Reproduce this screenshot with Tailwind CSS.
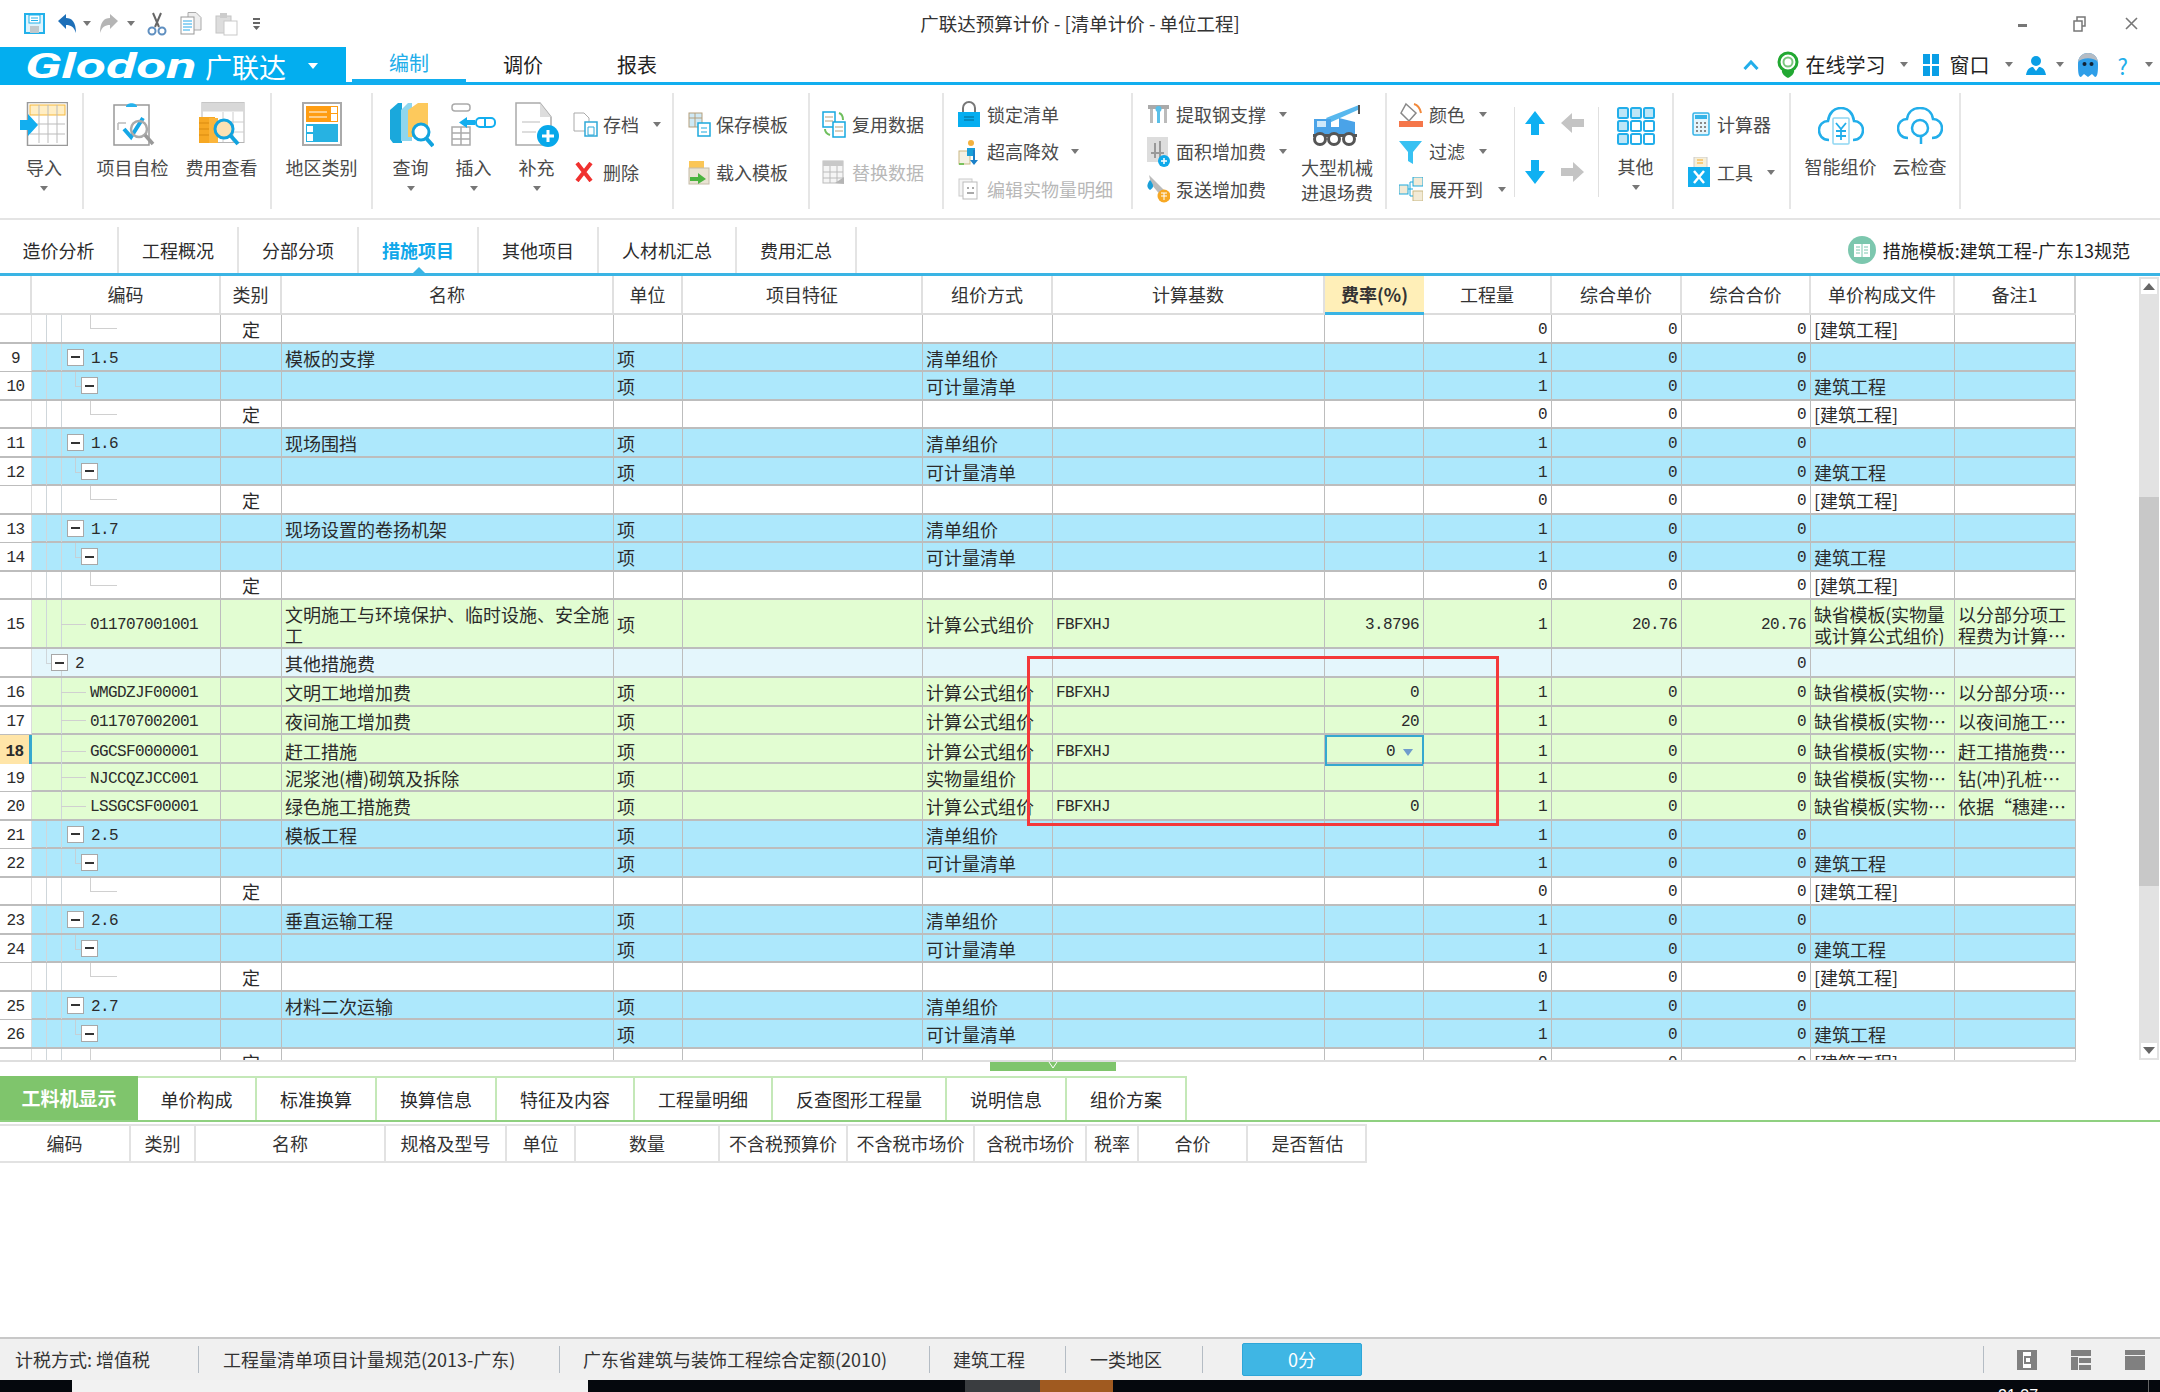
<!DOCTYPE html>
<html lang="zh-CN">
  <head>
    <meta charset="UTF-8" />
    <title>广联达预算计价 - [清单计价 - 单位工程]</title>
    <script src="https://cdn.jsdelivr.net/npm/@tailwindcss/browser@4"></script>
  </head>
  <body class="w-[2160px] h-[1392px] overflow-hidden bg-white text-[18px] text-[#2b2b2b] [font-family:'Noto_Sans_CJK_SC','Noto_Sans',sans-serif]">
    <!-- title bar -->
    <div class="grid grid-cols-[1fr_auto_1fr] items-center h-[47px] bg-white">
      <div class="flex items-center h-[40px] pl-[24px]">
        <svg width="21" height="21" viewBox="0 0 21 21"><rect x="1" y="1" width="19" height="19" fill="#dff4fd" stroke="#22b1ea" stroke-width="2"/><rect x="5" y="2" width="11" height="8" fill="#fff" stroke="#22b1ea"/><path d="M7 5h7M7 7.500h7" stroke="#22b1ea"/><rect x="6" y="13" width="9" height="7" fill="#bfc8cc"/></svg>
        <svg class="ml-[12px]" width="20" height="21" viewBox="0 0 20 21"><path d="M1 8 9 1v4c6 0 10 4 10 15-2-6-5-8-10-8v4z" fill="#1d6fb8"/></svg>
        <span class="ml-[6px] w-0 h-0 border-x-[4px] border-x-transparent border-t-[5px] border-t-[#777]"></span>
        <svg class="ml-[8px]" width="20" height="21" viewBox="0 0 20 21"><path d="M19 8 11 1v4C5 5 1 9 1 20c2-6 5-8 10-8v4z" fill="#b5b5b5"/></svg>
        <span class="ml-[8px] w-0 h-0 border-x-[4px] border-x-transparent border-t-[5px] border-t-[#777]"></span>
        <svg class="ml-[12px]" width="20" height="24" viewBox="0 0 20 24"><path d="M6 1l6 14M14 1 8 15" stroke="#666" stroke-width="2"/><circle cx="5" cy="19" r="3.500" fill="none" stroke="#5f8fc0" stroke-width="2"/><circle cx="15" cy="19" r="3.500" fill="none" stroke="#5f8fc0" stroke-width="2"/></svg>
        <svg class="ml-[13px]" width="23" height="24" viewBox="0 0 23 24"><path d="M8 .5h8l5 5V18H8z" fill="#eee" stroke="#aaa"/><rect x="1" y="5" width="13" height="17" fill="#fff" stroke="#999"/><path d="M3 9h9M3 12h9M3 15h9M3 18h7" stroke="#2aa9e8"/></svg>
        <svg class="ml-[12px]" width="23" height="24" viewBox="0 0 23 24"><rect x="1" y="4" width="15" height="17" fill="#ddd" stroke="#c4c4c4"/><rect x="5" y="1" width="7" height="5" fill="#ccc"/><rect x="9" y="9" width="13" height="14" fill="#fff" stroke="#c9c9c9"/></svg>
        <svg class="ml-[14px]" width="9" height="14" viewBox="0 0 9 14"><path d="M1 1h7v2H1zM1 5h7v2H1zM1 9h7l-3.500 4z" fill="#666"/></svg>
      </div>
      <div class="text-[18.500px] text-[#333]">广联达预算计价 - [清单计价 - 单位工程]</div>
      <div class="flex justify-end items-center h-[40px] pr-[22px]">
        <div class="w-[9px] h-[3px] bg-[#777] mt-[4px]"></div>
        <svg class="ml-[46px]" width="13" height="16" viewBox="0 0 13 16"><rect x="4" y="1" width="8" height="9" fill="none" stroke="#777" stroke-width="1.500"/><rect x="1" y="5" width="8" height="10" fill="#fff" stroke="#777" stroke-width="1.500"/></svg>
        <svg class="ml-[39px]" width="13" height="13" viewBox="0 0 13 13"><path d="M1 1l11 11M12 1 1 12" stroke="#777" stroke-width="1.600"/></svg>
      </div>
    </div>

    <!-- menu bar -->
    <div class="flex h-[38px] border-b-[3px] border-[#12aeef]">
      <div class="flex items-center w-[346px] h-[38px] pl-[25px] bg-[#03aeef] text-white overflow-hidden">
        <span class="inline-block w-[174px] origin-left scale-x-[1.58] italic font-bold text-[35px] leading-none [font-family:Roboto,sans-serif]">Glodon</span>
        <span class="ml-[6px] text-[27px] leading-none">广联达</span>
        <span class="ml-[22px] w-0 h-0 border-x-[5px] border-x-transparent border-t-[6px] border-t-white"></span>
      </div>
      <div class="ml-[6px] flex items-center justify-center w-[114px] text-[20px] text-[#22aeea] border-b-[3px] border-[#12aeef]">编制</div>
      <div class="flex items-center justify-center w-[114px] text-[20px] text-[#222]">调价</div>
      <div class="flex items-center justify-center w-[114px] text-[20px] text-[#222]">报表</div>
      <div class="ml-auto flex items-center pr-[7px]">
        <svg width="16" height="10" viewBox="0 0 16 10"><path d="M1.500 9 8 2l6.500 7" fill="none" stroke="#22aeea" stroke-width="3"/></svg>
        <svg class="ml-[17px]" width="24" height="28" viewBox="0 0 24 28"><circle cx="12" cy="11" r="9" fill="none" stroke="#22a832" stroke-width="3"/><circle cx="12" cy="11" r="4.500" fill="none" stroke="#7bc67e" stroke-width="2"/><path d="M6 19c-1 4 4 7 6 8 2-1 7-4 6-8z" fill="#22a832"/></svg>
        <span class="ml-[6px] text-[20px] text-[#222]">在线学习</span>
        <span class="ml-[14px] w-0 h-0 border-x-[4px] border-x-transparent border-t-[5px] border-t-[#777]"></span>
        <svg class="ml-[15px]" width="16" height="22" viewBox="0 0 16 22"><path d="M0 0h7v10H0zM9 0h7v10H9zM0 12h7v10H0zM9 12h7v10H9z" fill="#0a9fe6"/></svg>
        <span class="ml-[11px] text-[20px] text-[#222]">窗口</span>
        <span class="ml-[15px] w-0 h-0 border-x-[4px] border-x-transparent border-t-[5px] border-t-[#777]"></span>
        <svg class="ml-[13px]" width="20" height="20" viewBox="0 0 20 20"><circle cx="10" cy="6" r="5" fill="#0a9fe6"/><path d="M0 20c1-6 4-8 7-8l3 4 3-4c3 0 6 2 7 8z" fill="#0a9fe6"/></svg>
        <span class="ml-[10px] w-0 h-0 border-x-[4px] border-x-transparent border-t-[5px] border-t-[#777]"></span>
        <svg class="ml-[12px]" width="24" height="26" viewBox="0 0 24 26"><path d="M2 12C2 5 6 1 12 1s10 4 10 11c0 6 0 13-3 13l-3-3-4 3-4-3-3 3C2 25 2 18 2 12z" fill="#2f9ee8"/><path d="M2 10C3 4 7 1 12 1s9 3 10 9C18 5 6 5 2 10z" fill="#b5bcc4"/><circle cx="8.500" cy="12" r="2" fill="#123"/><circle cx="15.500" cy="12" r="2" fill="#123"/></svg>
        <span class="ml-[18px] text-[22px] leading-none text-[#22aeea]">?</span>
        <span class="ml-[17px] w-0 h-0 border-x-[4px] border-x-transparent border-t-[5px] border-t-[#777]"></span>
      </div>
    </div>

    <!-- ribbon -->
    <div class="flex h-[135px] pt-[8px] pb-[9px] border-b-[2px] border-[#e4e4e4] text-[#4a4a4a] whitespace-nowrap">
      <div class="w-[84px] pl-[12px] border-r-2 border-[#e6e6e6]">
        <div class="flex flex-col items-center w-[64px] pt-[9px]">
          <svg width="48" height="44" viewBox="0 0 48 44"><rect x="7.500" y=".5" width="40" height="43" fill="#fff" stroke="#9a9a9a" stroke-width="1.500"/><rect x="10" y="3" width="35" height="10" fill="#ffeec4" stroke="#f5b83d"/><path d="M19 3v38M28 3v38M37 3v38M10 22h35M10 32h35" stroke="#bbb"/><path d="M0 18h8v-6l10 11-10 11v-6H0z" fill="#12aeef"/></svg>
          <span class="mt-[9px] leading-[24px]">导入</span>
          <span class="mt-[7px] w-0 h-0 border-x-[4px] border-x-transparent border-t-[5px] border-t-[#777]"></span>
        </div>
      </div>
      <div class="flex w-[188px] pl-[4px] border-r-2 border-[#e6e6e6]">
        <div class="flex flex-col items-center w-[89px] pt-[9px]">
          <svg width="48" height="44" viewBox="0 0 48 44"><rect x="5" y="3" width="35" height="40" fill="#fff" stroke="#999" stroke-width="1.500"/><path d="M17 5c0-5 11-5 11 0z" fill="#26b2ec"/><path d="M9 21v7M9 21h8" stroke="#bbb" stroke-width="1.500"/><path d="M15 27l7 8 12-19" fill="none" stroke="#15a7e6" stroke-width="4"/><circle cx="30" cy="27" r="8" fill="none" stroke="#aaa" stroke-width="2.500"/><path d="M36 33l8 9" stroke="#999" stroke-width="3.500"/></svg>
          <span class="mt-[9px] leading-[24px]">项目自检</span>
        </div>
        <div class="flex flex-col items-center w-[89px] pt-[9px]">
          <svg width="48" height="44" viewBox="0 0 48 44"><rect x="4" y=".5" width="42" height="40" fill="#fff" stroke="#b5b5b5"/><rect x="4" y=".5" width="42" height="9" fill="#d8d8d8"/><path d="M25 10v30M35 10v30M4 20h42M4 30h42" stroke="#ccc"/><path d="M1 15h16v26H1z" fill="#f7a823"/><path d="M1 21h16M1 27h16M1 33h16" stroke="#d98a10"/><path d="M11 16h9v25h-9z" fill="#fbb53b"/><circle cx="26" cy="27" r="9" fill="#fde1b3" stroke="#12a3de" stroke-width="3"/><path d="M32 33l8 9" stroke="#12a3de" stroke-width="4"/></svg>
          <span class="mt-[9px] leading-[24px]">费用查看</span>
        </div>
      </div>
      <div class="flex justify-center w-[101px] border-r-2 border-[#e6e6e6]">
        <div class="flex flex-col items-center pt-[9px]">
          <svg width="40" height="44" viewBox="0 0 40 44"><rect x="1" y="1" width="38" height="42" fill="#fff" stroke="#aaa" stroke-width="2"/><rect x="4" y="4" width="32" height="16" fill="#ff9d12"/><path d="M29 5h6v6h-6zM29 12h6v7h-6z" fill="#fff"/><path d="M7 10h18M7 15h18" stroke="#fff"/><rect x="4" y="22" width="32" height="18" fill="#27b2e2"/><path d="M5 24h6v6H5zM5 32h6v7H5z" fill="#fff"/></svg>
          <span class="mt-[9px] leading-[24px]">地区类别</span>
        </div>
      </div>
      <div class="flex w-[301px] pl-[6px] border-r-2 border-[#e6e6e6]">
        <div class="flex flex-col items-center w-[63px] pt-[9px]">
          <svg width="46" height="46" viewBox="0 0 46 46"><path d="M2 8l8-7h4v40H5l-3-4z" fill="#1aa8dc"/><path d="M13 8l7-7h4v38H13z" fill="#8fd6ee"/><path d="M20 8l10-7 10 0v34H20z" fill="#fdc95c"/><circle cx="33" cy="30" r="8" fill="#fff" stroke="#12a3de" stroke-width="3"/><path d="M38 36l7 8" stroke="#12a3de" stroke-width="4"/></svg>
          <span class="mt-[7px] leading-[24px]">查询</span>
          <span class="mt-[7px] w-0 h-0 border-x-[4px] border-x-transparent border-t-[5px] border-t-[#777]"></span>
        </div>
        <div class="flex flex-col items-center w-[63px] pt-[9px]">
          <svg width="46" height="44" viewBox="0 0 46 44"><g fill="#fff" stroke="#aaa" stroke-width="1.500"><rect x="1" y="2" width="18" height="7" rx="3"/><path d="M1 25h18v18H1zM1 31h18M1 37h18M10 25v18"/></g><path d="M24 18l-8 0 0-3-8 5.500 8 5.500 0-3 8 0z" fill="#12aeef"/><rect x="25" y="16" width="19" height="9" rx="4" fill="#fff" stroke="#12aeef" stroke-width="2"/><path d="M34 16v9" stroke="#12aeef" stroke-width="2"/></svg>
          <span class="mt-[9px] leading-[24px]">插入</span>
          <span class="mt-[7px] w-0 h-0 border-x-[4px] border-x-transparent border-t-[5px] border-t-[#777]"></span>
        </div>
        <div class="flex flex-col items-center w-[63px] pt-[9px]">
          <svg width="46" height="46" viewBox="0 0 46 46"><path d="M2 1h24l11 14v28H2z" fill="#fff" stroke="#aaa" stroke-width="1.500"/><path d="M26 1v14h11z" fill="#ddd"/><path d="M8 20h18M8 30h14" stroke="#ddd" stroke-width="2"/><circle cx="34" cy="34" r="11" fill="#07a8ea"/><path d="M34 28v12M28 34h12" stroke="#fff" stroke-width="3"/></svg>
          <span class="mt-[7px] leading-[24px]">补充</span>
          <span class="mt-[7px] w-0 h-0 border-x-[4px] border-x-transparent border-t-[5px] border-t-[#777]"></span>
        </div>
        <div class="ml-[5px] flex flex-col gap-[24px] pt-[19px]">
          <div class="flex items-center h-[24px]">
            <svg class="w-[25px]" width="25" height="25" viewBox="0 0 25 25"><path d="M1 1h10l5 5v13H1z" fill="#fff" stroke="#aaa"/><rect x="12" y="10" width="12" height="14" fill="#fff" stroke="#2fa9d8" stroke-width="1.500"/><path d="M15 15h6v8h-6z" fill="none" stroke="#2fa9d8"/></svg>
            <span class="ml-[5px]">存档</span>
            <span class="ml-[14px] w-0 h-0 border-x-[4px] border-x-transparent border-t-[5px] border-t-[#777]"></span>
          </div>
          <div class="flex items-center h-[24px]">
            <svg class="w-[25px]" width="25" height="20" viewBox="0 0 25 20"><path d="M4 1l14 18M18 1 4 19" stroke="#f0312f" stroke-width="4"/></svg>
            <span class="ml-[5px]">删除</span>
          </div>
        </div>
      </div>
      <div class="flex flex-col gap-[24px] w-[136px] pl-[14px] pt-[19px] border-r-2 border-[#e6e6e6]">
        <div class="flex items-center h-[24px]">
          <svg class="w-[23px]" width="23" height="25" viewBox="0 0 23 25"><rect x="1" y="1" width="13" height="14" fill="#cfe9f5" stroke="#b59f7c"/><path d="M7 1v14M1 6h13" stroke="#b59f7c"/><rect x="10" y="11" width="12" height="13" fill="#fff" stroke="#1da9dd" stroke-width="1.500"/><path d="M13 16h6M13 20h6" stroke="#1da9dd"/></svg>
          <span class="ml-[5px]">保存模板</span>
        </div>
        <div class="flex items-center h-[24px]">
          <svg class="w-[23px]" width="23" height="25" viewBox="0 0 23 25"><rect x="1" y="1" width="15" height="7" fill="#fbc656"/><rect x="1" y="8" width="20" height="16" fill="#e9e3d3" stroke="#c5bca8"/><path d="M2 17h8v-4l8 6-8 5v-3H2z" fill="#4bb43f"/></svg>
          <span class="ml-[5px]">载入模板</span>
        </div>
      </div>
      <div class="flex flex-col gap-[24px] w-[134px] pl-[12px] pt-[19px] border-r-2 border-[#e6e6e6]">
        <div class="flex items-center h-[24px]">
          <svg class="w-[24px]" width="24" height="27" viewBox="0 0 24 27"><rect x="1" y="1" width="12" height="15" fill="#fff" stroke="#16a8e0" stroke-width="1.500"/><rect x="11" y="11" width="12" height="15" fill="#fff" stroke="#16a8e0" stroke-width="1.500"/><path d="M3 6h8M3 10h8M13 16h8M13 20h8" stroke="#b59f7c"/><path d="M17 2c3 1 4 4 4 7M3 18c0 3 2 5 5 6" fill="none" stroke="#6fbf5e" stroke-width="2"/></svg>
          <span class="ml-[6px]">复用数据</span>
        </div>
        <div class="flex items-center h-[24px] text-[#b8b8b8]">
          <svg class="w-[24px]" width="24" height="27" viewBox="0 0 24 27"><rect x="1" y="2" width="20" height="22" fill="#f5f5f5" stroke="#bbb"/><rect x="1" y="2" width="20" height="5" fill="#c8c8c8"/><path d="M8 7v17M15 7v17M1 13h20M1 19h20" stroke="#bbb"/><path d="M13 24l9-6v7z" fill="#b5b5b5"/></svg>
          <span class="ml-[6px]">替换数据</span>
        </div>
      </div>
      <div class="flex flex-col gap-[13.500px] w-[189px] pl-[14px] pt-[9px] border-r-2 border-[#e6e6e6]">
        <div class="flex items-center h-[24px]">
          <svg class="w-[22px]" width="22" height="26" viewBox="0 0 22 26"><path d="M5 11V7a6 6 0 0 1 12 0v4" fill="none" stroke="#777" stroke-width="2"/><rect x="0" y="11" width="22" height="15" fill="#06aef0"/><path d="M6 16h10M6 19h10" stroke="#05698f"/></svg>
          <span class="ml-[7px]">锁定清单</span>
        </div>
        <div class="flex items-center h-[24px]">
          <svg class="w-[22px]" width="22" height="26" viewBox="0 0 22 26"><rect x="1" y="12" width="11" height="13" fill="#f4f1e4" stroke="#c9b884"/><circle cx="13" cy="4" r="3" fill="#f3b13e"/><path d="M9 9h8v8H9z" fill="#1a9fd8"/><path d="M15 11v10h-3l4 5 4-5h-3V11z" fill="#1a7fc8"/><path d="M1 25h5" stroke="#7ac25e" stroke-width="2"/></svg>
          <span class="ml-[7px]">超高降效</span>
          <span class="ml-[12px] w-0 h-0 border-x-[4px] border-x-transparent border-t-[5px] border-t-[#777]"></span>
        </div>
        <div class="flex items-center h-[24px] text-[#b8b8b8]">
          <svg class="w-[22px]" width="22" height="22" viewBox="0 0 22 22"><rect x="1" y="1" width="13" height="17" fill="#f4f4f4" stroke="#ccc"/><rect x="5" y="4" width="14" height="17" fill="#fff" stroke="#bbb"/><path d="M9 10h2M14 10h2M9 15h7" stroke="#aaa" stroke-width="2"/></svg>
          <span class="ml-[7px]">编辑实物量明细</span>
        </div>
      </div>
      <div class="flex w-[254px] pl-[14px] border-r-2 border-[#e6e6e6]">
        <div class="flex flex-col gap-[13.500px] w-[152px] pt-[9px]">
          <div class="flex items-center h-[24px]">
            <svg class="w-[23px]" width="23" height="20" viewBox="0 0 23 20"><path d="M1 1h21v4H1z" fill="#aaa"/><path d="M3 5h3v14H3zM17 5h3v14h-3z" fill="#bbb"/><path d="M10 5h3v14h-3z" fill="#59bfe8"/><circle cx="11.500" cy="5" r="3" fill="#59bfe8"/></svg>
            <span class="ml-[6px]">提取钢支撑</span>
            <span class="ml-[13px] w-0 h-0 border-x-[4px] border-x-transparent border-t-[5px] border-t-[#777]"></span>
          </div>
          <div class="flex items-center h-[24px]">
            <svg class="w-[23px]" width="23" height="30" viewBox="0 0 23 30"><rect x="0" y="0" width="21" height="25" fill="#ddd"/><path d="M4 16h13M8 6v15M13 4v17" stroke="#999" stroke-width="2"/><circle cx="17" cy="24" r="6" fill="#0ea9ea"/><path d="M17 21v6M14 24h6" stroke="#fff" stroke-width="1.500"/></svg>
            <span class="ml-[6px]">面积增加费</span>
            <span class="ml-[13px] w-0 h-0 border-x-[4px] border-x-transparent border-t-[5px] border-t-[#777]"></span>
          </div>
          <div class="flex items-center h-[24px]">
            <svg class="w-[23px]" width="23" height="28" viewBox="0 0 23 28"><path d="M2 0l18 18-5 4L4 9z" fill="#bbb"/><path d="M3 5c3 4 5 7 0 10-4-3-3-6 0-10z" fill="#1a9fd8"/><circle cx="17" cy="21" r="6.500" fill="#f7a823"/><path d="M14 18h6M14 21h6M17 18v7" stroke="#fff"/></svg>
            <span class="ml-[6px]">泵送增加费</span>
          </div>
        </div>
        <div class="flex flex-col items-center w-[76px] pt-[9px]">
          <svg width="50" height="44" viewBox="0 0 50 44"><path d="M14 16 47 3l1 4-31 14z" fill="#58b8ee"/><path d="M2 17h17v8h8v-9l16 4v12H2z" fill="#4aa3e8"/><rect x="5" y="19" width="9" height="6" fill="#cfe9fa"/><path d="M47 3v9" stroke="#555" stroke-width="2"/><path d="M1 32h44v3H1z" fill="#555"/><circle cx="8" cy="37" r="5.500" fill="#fff" stroke="#555" stroke-width="3"/><circle cx="22" cy="37" r="5.500" fill="#fff" stroke="#555" stroke-width="3"/><circle cx="37" cy="37" r="5.500" fill="#fff" stroke="#555" stroke-width="3"/></svg>
          <span class="mt-[9px] leading-[25px]">大型机械</span>
          <span class="leading-[25px]">进退场费</span>
        </div>
      </div>
      <div class="flex flex-col gap-[13.500px] w-[127px] pl-[12px] pt-[9px]">
        <div class="flex items-center h-[24px]">
          <svg class="w-[24px]" width="24" height="25" viewBox="0 0 24 25"><path d="M7 2l10 9-7 8-8-8z" fill="#fff" stroke="#888" stroke-width="1.500"/><path d="M15 2c4 1 6 4 7 9" fill="none" stroke="#f2893b" stroke-width="2"/><rect x="0" y="19" width="24" height="6" fill="#f5764a"/></svg>
          <span class="ml-[6px]">颜色</span>
          <span class="ml-[14px] w-0 h-0 border-x-[4px] border-x-transparent border-t-[5px] border-t-[#777]"></span>
        </div>
        <div class="flex items-center h-[24px]">
          <svg class="w-[24px]" width="24" height="24" viewBox="0 0 24 24"><path d="M0 1h23l-9 11v12l-5-3v-9z" fill="#38c1f2"/></svg>
          <span class="ml-[6px]">过滤</span>
          <span class="ml-[14px] w-0 h-0 border-x-[4px] border-x-transparent border-t-[5px] border-t-[#777]"></span>
        </div>
        <div class="flex items-center h-[24px]">
          <svg class="w-[24px]" width="24" height="24" viewBox="0 0 24 24"><rect x="0" y="8" width="9" height="9" fill="#f2ead6" stroke="#1da9dd"/><rect x="14" y="0" width="10" height="9" fill="#f2ead6" stroke="#1da9dd"/><rect x="14" y="14" width="10" height="10" fill="#f2ead6" stroke="#c9b884"/><path d="M9 12h5M11 5h3M11 5v14h3" fill="none" stroke="#1da9dd"/></svg>
          <span class="ml-[6px]">展开到</span>
          <span class="ml-[15px] w-0 h-0 border-x-[4px] border-x-transparent border-t-[5px] border-t-[#777]"></span>
        </div>
      </div>
      <div class="w-px h-[90px] mt-[14px] bg-[#e0e0e0]"></div>
      <div class="grid grid-cols-[38px_38px] grid-rows-[24px_24px] gap-y-[25px] w-[83px] pl-[8px] pt-[18px]">
        <svg width="24" height="24" viewBox="0 0 24 24"><path d="M12 0l10 13h-6v11H8V13H2z" fill="#0fb0f2"/></svg>
        <svg width="24" height="24" viewBox="0 0 24 24"><path d="M0 12 11 2v6h12v8H11v6z" fill="#c4c4c4"/></svg>
        <svg width="24" height="24" viewBox="0 0 24 24"><path d="M12 24 2 11h6V0h8v11h6z" fill="#0fb0f2"/></svg>
        <svg width="24" height="24" viewBox="0 0 24 24"><path d="M23 12 12 2v6H0v8h12v6z" fill="#c4c4c4"/></svg>
      </div>
      <div class="w-px h-[90px] mt-[14px] bg-[#e0e0e0]"></div>
      <div class="flex justify-center w-[75px] border-r-2 border-[#e6e6e6]">
        <div class="flex flex-col items-center pt-[14px]">
          <svg width="38" height="38" viewBox="0 0 38 38"><g fill="#fff" stroke="#22aeea" stroke-width="2"><rect x="1" y="1" width="10" height="10" rx="1.500" fill="#bde6f7"/><rect x="14" y="1" width="10" height="10" rx="1.500" fill="#bde6f7"/><rect x="27" y="1" width="10" height="10" rx="1.500" fill="#bde6f7"/><rect x="1" y="14" width="10" height="10" rx="1.500" fill="#bde6f7"/><rect x="14" y="14" width="10" height="10" rx="1.500"/><rect x="27" y="14" width="10" height="10" rx="1.500"/><rect x="1" y="27" width="10" height="10" rx="1.500" fill="#bde6f7"/><rect x="14" y="27" width="10" height="10" rx="1.500"/><rect x="27" y="27" width="10" height="10" rx="1.500"/></g></svg>
          <span class="mt-[9px] leading-[24px]">其他</span>
          <span class="mt-[7px] w-0 h-0 border-x-[4px] border-x-transparent border-t-[5px] border-t-[#777]"></span>
        </div>
      </div>
      <div class="flex flex-col gap-[24px] w-[117px] pl-[14px] pt-[19px] border-r-2 border-[#e6e6e6]">
        <div class="flex items-center h-[24px]">
          <svg class="w-[23px] pl-[3px]" width="23" height="24" viewBox="0 0 18 24"><rect x="1" y="1" width="16" height="22" rx="1.500" fill="#e4f5fc" stroke="#36b4e8" stroke-width="1.500"/><rect x="3" y="3" width="12" height="4" fill="#36b4e8"/><path d="M4 11h2M8 11h2M12 11h2M4 15h2M8 15h2M12 15h2M4 19h2M8 19h2M12 19h2" stroke="#888" stroke-width="2"/></svg>
          <span class="ml-[6px]">计算器</span>
        </div>
        <div class="flex items-center h-[24px]">
          <svg class="w-[23px]" width="23" height="30" viewBox="0 0 23 30"><rect x="6" y="0" width="13" height="12" fill="#f6efd8" stroke="#ccc"/><path d="M9 3h6M9 6h6" stroke="#f7a823"/><rect x="0" y="10" width="22" height="20" fill="#12aeef"/><path d="M6 14l10 12M16 14 6 26" stroke="#fff" stroke-width="2.500"/></svg>
          <span class="ml-[6px]">工具</span>
          <span class="ml-[14px] w-0 h-0 border-x-[4px] border-x-transparent border-t-[5px] border-t-[#777]"></span>
        </div>
      </div>
      <div class="flex w-[170px] pl-[10px] border-r-2 border-[#e6e6e6]">
        <div class="flex flex-col items-center w-[79px] pt-[14px]">
          <svg width="46" height="38" viewBox="0 0 46 38"><path d="M11 33C4 33 1 28 1 23c0-5 4-9 9-9C11 6 16 1 23 1s12 5 13 13c5 0 9 4 9 9s-3 10-10 10" fill="none" stroke="#22aeea" stroke-width="2.500"/><rect x="15" y="11" width="16" height="26" rx="1" fill="#fff" stroke="#8fd6f2" stroke-width="1.500"/><path d="M18 16l5 6 5-6M23 22v11M18 24h10M18 29h10" fill="none" stroke="#22aeea" stroke-width="1.800"/></svg>
          <span class="mt-[9px] leading-[24px]">智能组价</span>
        </div>
        <div class="flex flex-col items-center w-[79px] pt-[14px]">
          <svg width="46" height="38" viewBox="0 0 46 38"><path d="M11 31C4 31 1 26 1 21c0-5 4-9 9-9C11 5 16 1 23 1s12 4 13 11c5 0 9 4 9 9s-3 10-10 10" fill="none" stroke="#22aeea" stroke-width="2.500"/><circle cx="23" cy="21" r="8" fill="none" stroke="#22aeea" stroke-width="2.500"/><path d="M24 29v8" stroke="#22aeea" stroke-width="2.500"/></svg>
          <span class="mt-[9px] leading-[24px]">云检查</span>
        </div>
      </div>
    </div>

    <!-- view tabs -->
    <div class="flex items-stretch h-[56px] pt-[7px] border-b-[3px] border-[#3ab4e4] whitespace-nowrap">
      <div class="flex items-center justify-center w-[119px] border-r-2 border-[#e4e4e4]">造价分析</div>
      <div class="flex items-center justify-center w-[120px] border-r-2 border-[#e4e4e4]">工程概况</div>
      <div class="flex items-center justify-center w-[120px] border-r-2 border-[#e4e4e4]">分部分项</div>
      <div class="relative flex items-center justify-center w-[120px] border-r-2 border-[#e4e4e4] font-bold text-[#11a8ea]">措施项目<span class="absolute bottom-0 left-[54px] w-0 h-0 border-x-[6px] border-x-transparent border-b-[6px] border-b-[#3ab4e4]"></span></div>
      <div class="flex items-center justify-center w-[120px] border-r-2 border-[#e4e4e4]">其他项目</div>
      <div class="flex items-center justify-center w-[138px] border-r-2 border-[#e4e4e4]">人材机汇总</div>
      <div class="flex items-center justify-center w-[120px] border-r-2 border-[#e4e4e4]">费用汇总</div>
      <div class="ml-auto flex items-center pr-[30px]">
        <svg width="28" height="28" viewBox="0 0 28 28"><circle cx="14" cy="14" r="14" fill="#7cc7ae"/><rect x="6" y="8" width="16" height="13" fill="#fff"/><path d="M14 8v13M8 11h4M8 14h4M8 17h4M16 11h4M16 14h4M16 17h4" stroke="#7cc7ae"/></svg>
        <span class="ml-[7px] text-[#222]">措施模板:建筑工程-广东13规范</span>
      </div>
    </div>

    <!-- main grid -->
    <div class="relative flex h-[786px] whitespace-nowrap">
      <div id="sheet" class="w-[2076px] h-[786px] overflow-hidden border-b-2 border-[#dedede]">
        <div class="grid grid-cols-[32px_189px_61px_332px_69px_240px_130px_272px_99px_128px_130px_129px_144px_121px] h-[39px] border-b-[2px] border-[#dcdcdc] text-[#333]">
          <div class="border-r-2 border-[#e0e0e0]"></div>
          <div class="flex items-center justify-center border-r-2 border-[#e0e0e0]">编码</div>
          <div class="flex items-center justify-center border-r-2 border-[#e0e0e0]">类别</div>
          <div class="flex items-center justify-center border-r-2 border-[#e0e0e0]">名称</div>
          <div class="flex items-center justify-center border-r-2 border-[#e0e0e0]">单位</div>
          <div class="flex items-center justify-center border-r-2 border-[#e0e0e0]">项目特征</div>
          <div class="flex items-center justify-center border-r-2 border-[#e0e0e0]">组价方式</div>
          <div class="flex items-center justify-center border-r-2 border-[#e0e0e0]">计算基数</div>
          <div class="flex items-center justify-center bg-[#ffefb8] border-b-[3px] border-[#3ab4e4] font-bold -mb-[2px]">费率(%)</div>
          <div class="flex items-center justify-center border-r-2 border-[#e0e0e0]">工程量</div>
          <div class="flex items-center justify-center border-r-2 border-[#e0e0e0]">综合单价</div>
          <div class="flex items-center justify-center border-r-2 border-[#e0e0e0]">综合合价</div>
          <div class="flex items-center justify-center border-r-2 border-[#e0e0e0]">单价构成文件</div>
          <div class="flex items-center justify-center border-r-2 border-[#cfcfcf]">备注1</div>
        </div>
        <div id="rows"></div>
      </div>
      <div class="relative ml-[63px] mt-[1px] w-[20px] h-[783px] bg-[#e2e2e2]">
        <div class="flex items-center justify-center h-[19px] bg-white border-2 border-[#e2e2e2]"><span class="w-0 h-0 border-x-[6px] border-x-transparent border-b-[7px] border-b-[#666]"></span></div>
        <div class="absolute left-0 right-0 top-[220px] h-[389px] bg-[#c8c8c8]"></div>
        <div class="absolute bottom-0 left-0 right-0 flex items-center justify-center h-[19px] bg-white border-2 border-[#e2e2e2]"><span class="w-0 h-0 border-x-[6px] border-x-transparent border-t-[7px] border-t-[#666]"></span></div>
      </div>
      <!-- annotation drawn over the grid -->
      <div class="absolute left-[1027px] top-[380px] w-[472px] h-[170px] border-[3px] border-[#f4383a]"></div>
      <div class="absolute left-[990px] top-[786px] flex items-start justify-center w-[126px] h-[9px] bg-[#7fc56c]"><svg width="12" height="8" viewBox="0 0 12 8"><path d="M2 0l4 6 4-6" fill="none" stroke="#fff"/></svg></div>
    </div>

    <!-- detail tabs -->
    <div class="flex h-[46px] mt-[14px] border-b-2 border-[#8fd080] whitespace-nowrap">
      <div class="flex items-center justify-center w-[138px] bg-[#7fc56c] text-white font-bold text-[19px]">工料机显示</div>
      <div class="flex items-center justify-center w-[119px] border-t-2 border-r-2 border-[#c4e8b8]">单价构成</div>
      <div class="flex items-center justify-center w-[120px] border-t-2 border-r-2 border-[#c4e8b8]">标准换算</div>
      <div class="flex items-center justify-center w-[120px] border-t-2 border-r-2 border-[#c4e8b8]">换算信息</div>
      <div class="flex items-center justify-center w-[138px] border-t-2 border-r-2 border-[#c4e8b8]">特征及内容</div>
      <div class="flex items-center justify-center w-[138px] border-t-2 border-r-2 border-[#c4e8b8]">工程量明细</div>
      <div class="flex items-center justify-center w-[174px] border-t-2 border-r-2 border-[#c4e8b8]">反查图形工程量</div>
      <div class="flex items-center justify-center w-[120px] border-t-2 border-r-2 border-[#c4e8b8]">说明信息</div>
      <div class="flex items-center justify-center w-[120px] border-t-2 border-r-2 border-[#c4e8b8]">组价方案</div>
    </div>
    <div class="grid grid-cols-[131px_65px_190px_121px_69px_144px_128px_127px_112px_52px_109px_119px] w-[1367px] h-[39px] mt-[2px] border-t-2 border-b-[2px] border-r-2 border-[#e2e2e2] whitespace-nowrap text-[#333]">
      <div class="flex items-center justify-center border-r-2 border-[#e2e2e2]">编码</div>
      <div class="flex items-center justify-center border-r-2 border-[#e2e2e2]">类别</div>
      <div class="flex items-center justify-center border-r-2 border-[#e2e2e2]">名称</div>
      <div class="flex items-center justify-center border-r-2 border-[#e2e2e2]">规格及型号</div>
      <div class="flex items-center justify-center border-r-2 border-[#e2e2e2]">单位</div>
      <div class="flex items-center justify-center border-r-2 border-[#e2e2e2]">数量</div>
      <div class="flex items-center justify-center border-r-2 border-[#e2e2e2]">不含税预算价</div>
      <div class="flex items-center justify-center border-r-2 border-[#e2e2e2]">不含税市场价</div>
      <div class="flex items-center justify-center border-r-2 border-[#e2e2e2] tracking-[-0.5px]">含税市场价</div>
      <div class="flex items-center justify-center border-r-2 border-[#e2e2e2]">税率</div>
      <div class="flex items-center justify-center border-r-2 border-[#e2e2e2]">合价</div>
      <div class="flex items-center justify-center">是否暂估</div>
    </div>

    <!-- status bar -->
    <div class="flex items-center h-[43px] mt-[174px] bg-[#f0f0f0] border-t-2 border-[#c8c8c8] whitespace-nowrap text-[#333]">
      <div class="flex items-center w-[199px] h-[27px] pl-[15px] border-r border-[#b4bcc4]">计税方式: 增值税</div>
      <div class="flex items-center w-[361px] h-[27px] pl-[24px] border-r border-[#b4bcc4]">工程量清单项目计量规范(2013-广东)</div>
      <div class="flex items-center w-[370px] h-[27px] pl-[23px] border-r border-[#b4bcc4]">广东省建筑与装饰工程综合定额(2010)</div>
      <div class="flex items-center w-[136px] h-[27px] pl-[23px] border-r border-[#b4bcc4]">建筑工程</div>
      <div class="flex items-center w-[137px] h-[27px] pl-[24px] border-r border-[#b4bcc4]">一类地区</div>
      <div class="flex items-center justify-center ml-[39px] w-[120px] h-[33px] bg-[#3fb6e4] border border-[#2ea6d8] rounded-[2px] text-white">0分</div>
      <div class="flex items-center ml-auto h-[27px] pr-[15px] border-l border-[#b4bcc4]">
        <svg class="ml-[33px]" width="20" height="20" viewBox="0 0 20 20"><rect x="1" y="1" width="18" height="18" fill="#fff" stroke="#808080" stroke-width="2"/><rect x="1" y="1" width="5" height="18" fill="#808080"/><rect x="14" y="1" width="5" height="18" fill="#808080"/><rect x="8" y="7" width="6" height="6" fill="none" stroke="#808080" stroke-width="2"/></svg>
        <svg class="ml-[34px]" width="20" height="20" viewBox="0 0 20 20"><path d="M0 0h20v6H0zM0 7h7v13H0zM8 8h12v5H8zM8 15h12v5H8z" fill="#808080"/></svg>
        <svg class="ml-[34px]" width="20" height="20" viewBox="0 0 20 20"><path d="M0 0h20v5H0zM0 6h20v14H0z" fill="#808080"/></svg>
      </div>
    </div>

    <!-- taskbar, cut off by the bottom edge of the capture -->
    <div class="flex h-[12px] bg-[#05080d] overflow-hidden whitespace-nowrap">
      <div class="ml-[72px] w-[516px] bg-[#f2f2f2]"></div>
      <div class="ml-[377px] w-[75px] bg-[#3a3d40]"></div>
      <div class="w-[73px] bg-[#a05a20]"></div>
      <div class="ml-[885px] pt-[6px] text-[16px] leading-[20px] text-white [font-family:'Liberation_Sans',sans-serif]">21:37</div>
      <div class="ml-[110px] w-px bg-[#666]"></div>
    </div>

    <script>
      const GRID = 'grid grid-cols-[32px_189px_61px_332px_69px_240px_130px_272px_99px_128px_130px_129px_144px_121px]';
      const CELL = 'flex items-center overflow-hidden px-[3px] pt-[2px] border-r border-[#bdbdbd]';
      const MONO = "pt-[3px] text-[16px] tracking-[-0.6px] [font-family:'Liberation_Mono',monospace]";
      const NUM = 'flex items-center justify-end overflow-hidden pl-[3px] pr-[4px] border-r border-[#bdbdbd] ' + MONO;
      const BASE = 'flex items-center overflow-hidden px-[3px] border-r border-[#bdbdbd] ' + MONO;
      const BLUE = 'bg-[#ade8fc]';
      const GREEN = 'bg-[#e2fdd2]';
      const PALE = 'bg-[#e4f6fc]';
      const WHITE = 'bg-white';

      const minusBox = pos =>
        `<span class="absolute ${pos} flex items-center justify-center w-[17px] h-[17px] bg-white border border-[#a8a8a8]"><span class="w-[9px] h-[2px] bg-[#333]"></span></span>`;

      // tree guide lines are offset from the left edge of the code cell
      function tree(kind, upper) {
        const far = upper ? '<i class="absolute left-[14px] top-0 bottom-0 w-px bg-[#cfd6da]"></i>' : '';
        const near = '<i class="absolute left-[29px] top-0 bottom-0 w-px bg-[#cfd6da]"></i>';
        if (kind === 'head')
          return far + near + minusBox('left-[35px] top-[5px]');
        if (kind === 'sub')
          return far + near + '<i class="absolute left-[43px] top-0 h-[14px] w-px bg-[#c4d0d6]"></i><i class="absolute left-[43px] top-[14px] w-[6px] h-px bg-[#c4d0d6]"></i>' + minusBox('left-[49px] top-[5px]');
        if (kind === 'def')
          return far + near + '<i class="absolute left-[58px] top-0 h-[13px] w-px bg-[#d0d0d0]"></i><i class="absolute left-[58px] top-[13px] w-[27px] h-px bg-[#d0d0d0]"></i>';
        if (kind === 'group')
          return '<i class="absolute left-[14px] top-0 h-[14px] w-px bg-[#cfd6da]"></i><i class="absolute left-[14px] top-[14px] w-[5px] h-px bg-[#cfd6da]"></i><i class="absolute left-[29px] top-[20px] bottom-0 w-px bg-[#cfd6da]"></i>' + minusBox('left-[19px] top-[5px]');
        return (upper ? far : '') + near + '<i class="absolute left-[29px] top-1/2 w-[25px] h-px bg-[#d0d0d0]"></i>';
      }

      function row(r) {
        const height = r.tall ? 'h-[49px]' : r.mid ? 'h-[29px]' : 'h-[28.5px]';
        const noCell = r.current
          ? `<div class="flex items-center justify-center bg-[#ffe5a8] border-r-[3px] border-[#35a8cf] font-bold ${MONO}">${r.no}</div>`
          : `<div class="flex items-center justify-center bg-white border-r border-[#dcdcdc] ${MONO}">${r.no || ''}</div>`;
        const codePad = r.kind === 'head' ? 'pl-[59px]' : r.kind === 'group' ? 'pl-[43px]' : 'pl-[58px]';
        const rateCell = r.selected
          ? `<div class="flex items-center justify-end gap-[8px] pr-[9px] border-2 border-[#35a8cf] ${MONO}">0<span class="w-0 h-0 border-x-[5px] border-x-transparent border-t-[7px] border-t-[#6f9ccc]"></span></div>`
          : `<div class="${NUM}">${r.rate ?? ''}</div>`;
        return `<div class="${GRID} ${height} ${r.bg} border-b-2 border-[#bdbdbd]">
          ${noCell}
          <div class="relative flex items-center ${codePad} border-r border-[#bdbdbd] ${MONO}">${tree(r.kind, r.upper)}${r.code ? `<span class="relative">${r.code}</span>` : ''}</div>
          <div class="${CELL} justify-center">${r.type || ''}</div>
          <div class="${CELL}"><span class="${r.tall ? 'whitespace-normal break-all leading-[21px]' : ''}">${r.name || ''}</span></div>
          <div class="${CELL}">${r.unit || ''}</div>
          <div class="${CELL}"></div>
          <div class="${CELL}">${r.method || ''}</div>
          <div class="${BASE}">${r.base || ''}</div>
          ${rateCell}
          <div class="${NUM}">${r.qty ?? ''}</div>
          <div class="${NUM}">${r.price ?? ''}</div>
          <div class="${NUM}">${r.total ?? ''}</div>
          <div class="${CELL}"><span class="${r.tall ? 'leading-[21px] tracking-[-0.2px]' : ''}">${r.file || ''}</span></div>
          <div class="${CELL}"><span class="${r.tall ? 'leading-[21px]' : ''}">${r.note || ''}</span></div>
        </div>`;
      }

      const def = () => ({ bg: WHITE, kind: 'def', upper: true, type: '定', qty: 0, price: 0, total: 0, file: '[建筑工程]' });
      const head = (no, code, name) => ({ bg: BLUE, kind: 'head', upper: true, no, code, name, unit: '项', method: '清单组价', qty: 1, price: 0, total: 0 });
      const sub = no => ({ bg: BLUE, kind: 'sub', upper: true, no, unit: '项', method: '可计量清单', qty: 1, price: 0, total: 0, file: '建筑工程' });
      const item = (no, code, name, method, base, rate, note, extra = {}) => ({
        bg: GREEN, kind: 'leaf', no, code, name, unit: '项', method, base, rate, qty: 1, price: 0, total: 0, file: '缺省模板(实物⋯', note, ...extra
      });

      const data = [
        def(),
        head(9, '1.5', '模板的支撑'), sub(10), def(),
        head(11, '1.6', '现场围挡'), sub(12), def(),
        head(13, '1.7', '现场设置的卷扬机架'), sub(14), def(),
        item(15, '011707001001', '文明施工与环境保护、临时设施、安全施工', '计算公式组价', 'FBFXHJ', '3.8796', '以分部分项工<br>程费为计算⋯', {
          tall: true, upper: true, price: '20.76', total: '20.76', file: '缺省模板(实物量<br>或计算公式组价)'
        }),
        { bg: PALE, kind: 'group', mid: true, code: '2', name: '其他措施费', total: 0 },
        item(16, 'WMGDZJF00001', '文明工地增加费', '计算公式组价', 'FBFXHJ', '0', '以分部分项⋯'),
        item(17, '011707002001', '夜间施工增加费', '计算公式组价', '', '20', '以夜间施工⋯'),
        item(18, 'GGCSF0000001', '赶工措施', '计算公式组价', 'FBFXHJ', '0', '赶工措施费⋯', { current: true, selected: true }),
        item(19, 'NJCCQZJCC001', '泥浆池(槽)砌筑及拆除', '实物量组价', '', '', '钻(冲)孔桩⋯'),
        item(20, 'LSSGCSF00001', '绿色施工措施费', '计算公式组价', 'FBFXHJ', '0', '依据“穗建⋯'),
        head(21, '2.5', '模板工程'), sub(22), def(),
        head(23, '2.6', '垂直运输工程'), sub(24), def(),
        head(25, '2.7', '材料二次运输'), sub(26), def()
      ];

      document.getElementById('rows').innerHTML = data.map(row).join('');
    </script>
  </body>
</html>
